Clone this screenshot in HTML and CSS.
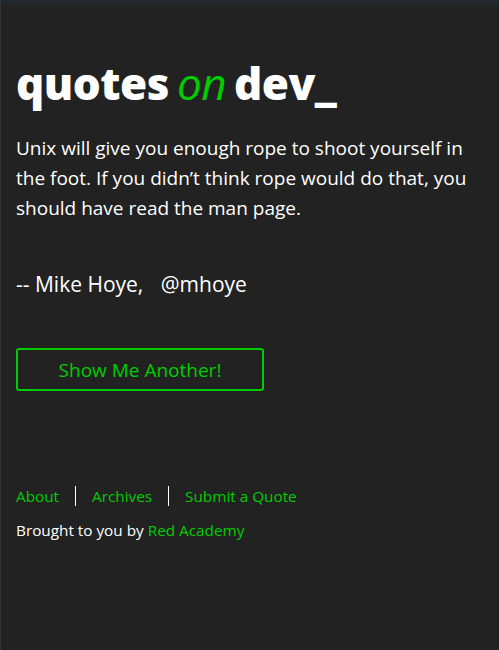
FILE: index.html
```html
<!DOCTYPE html>
<html>
<head>
<meta charset="utf-8">
<link rel="stylesheet" href="styles.css">
</head>
<body>
<div class="topbar"></div>
<div class="page">
  <header class="site-header">
    <h1 class="logo">quotes <span class="on">on</span> dev_</h1>
  </header>
  <main class="content">
    <p class="quote">Unix will give you enough rope to shoot yourself in the foot. If you didn’t think rope would do that, you should have read the man page.</p>
    <p class="source">-- Mike Hoye, <span class="handle">@mhoye</span></p>
    <button class="another">Show Me Another!</button>
  </main>
  <footer class="site-footer">
    <nav class="links">
      <a href="#">About</a>
      <a href="#">Archives</a>
      <a href="#">Submit a Quote</a>
    </nav>
    <p class="credit">Brought to you by <a href="#">Red Academy</a></p>
  </footer>
</div>
</body>
</html>
```

FILE: styles.css
```css
html, body {
  margin: 0;
  padding: 0;
  background: #222222;
  height: 100%;
}
body {
  font-family: "Open Sans", "Liberation Sans", sans-serif;
  color: #ffffff;
  border-left: 1px solid #333333;
  box-sizing: border-box;
}
.topbar {
  height: 5px;
  background: #23272e;
}
.page {
  padding: 0 15px;
}
.logo {
  margin: 0;
  padding-top: 50px;
  font-size: 44px;
  line-height: 56px;
  font-weight: 800;
  letter-spacing: -0.5px;
  word-spacing: -3px;
}
.on {
  color: #00cc00;
  font-weight: 400;
  font-style: italic;
}
.quote {
  margin: 22px 0 0;
  max-width: 462px;
  font-size: 19px;
  line-height: 30px;
}
.source {
  margin: 46px 0 0;
  font-size: 21px;
  line-height: 30px;
}
.handle {
  margin-left: 12px;
}
.another {
  margin-top: 49px;
  width: 248px;
  height: 43px;
  background: transparent;
  border: 2px solid #00cc00;
  border-radius: 3px;
  color: #00cc00;
  font-family: inherit;
  font-size: 19px;
}
.site-footer {
  margin-top: 95px;
}
.links {
  display: flex;
  align-items: center;
  font-size: 15.3px;
  line-height: 20px;
}
.links a {
  padding: 0 16px;
  border-left: 1px solid #ffffff;
}
.links a:first-child {
  padding-left: 0;
  border-left: none;
}
a {
  color: #00cc00;
  text-decoration: none;
}
.credit {
  margin: 14px 0 0;
  font-size: 15.3px;
  line-height: 20px;
}
```
